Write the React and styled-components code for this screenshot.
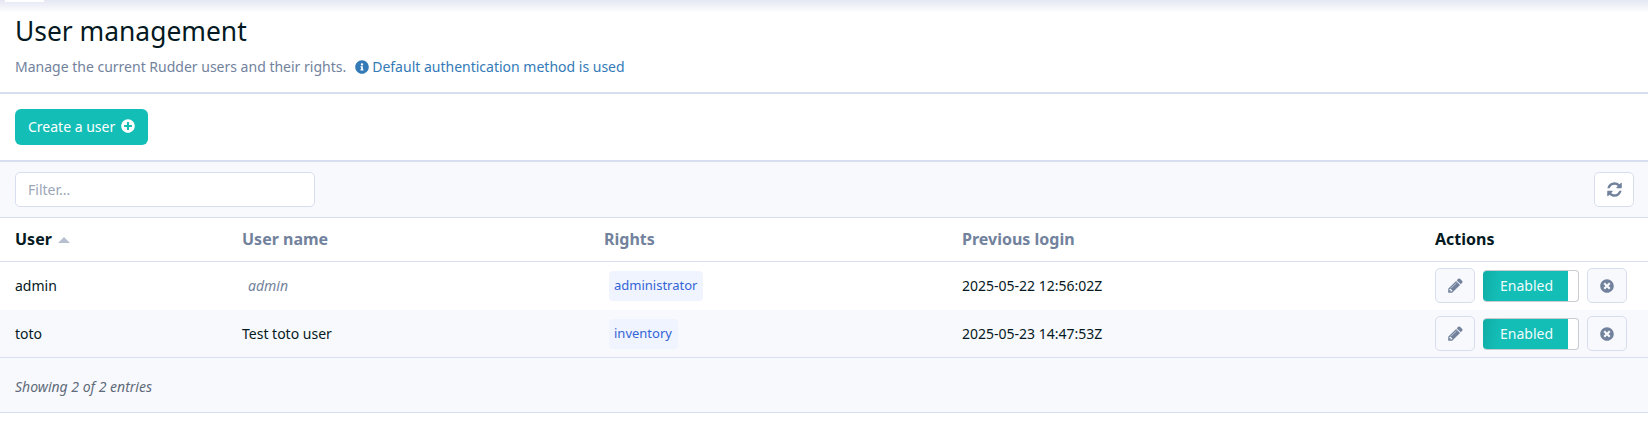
import React from "react";
import styled, { createGlobalStyle } from "styled-components";
import { FaInfoCircle, FaPlusCircle, FaTimesCircle } from "react-icons/fa";

const Global = createGlobalStyle`
  html, body { margin: 0; padding: 0; background: #fff; }
  body { font-family: "Noto Sans", sans-serif; font-size: 14px; color: #041922; }
  * { box-sizing: border-box; }
`;

const Page = styled.div`
  position: relative;
  width: 1648px;
  height: 421px;
  overflow: hidden;
  background: #fff;
`;
const TopShadow = styled.div`
  position: absolute;
  inset: 0 0 auto 0;
  height: 13px;
  background: linear-gradient(#e4e7f2, #ffffff);
`;
const TopTab = styled.div`
  position: absolute;
  left: 5px;
  top: 0;
  width: 39px;
  height: 2px;
  background: #fff;
`;
const Header = styled.header`
  position: relative;
  height: 94px;
  padding: 12px 15px 0;
  border-bottom: 2px solid #d6deef;
`;
const Title = styled.h1`
  margin: 0;
  height: 38px;
  font-size: 26.4px;
  line-height: 38px;
  font-weight: 400;
  color: #041922;
`;
const Subtitle = styled.p`
  margin: 7px 0 0;
  display: flex;
  align-items: center;
  font-size: 14px;
  line-height: 20px;
  color: #72829d;
`;
const Info = styled.span`
  display: inline-flex;
  align-items: center;
  gap: 3px;
  margin-left: 9px;
  color: #337ab7;
  svg { font-size: 14px; }
`;
const ActionBar = styled.div`
  display: flex;
  align-items: flex-start;
  height: 68px;
  padding: 15px 15px 0;
  border-bottom: 2px solid #d6deef;
`;
const CreateButton = styled.button`
  display: inline-flex;
  align-items: center;
  gap: 6px;
  width: 133px;
  height: 36px;
  padding: 0 13px 2px;
  border: 0;
  border-radius: 6px;
  background: #13beb7;
  color: #fff;
  white-space: nowrap;
  font: 400 14px "Noto Sans", sans-serif;
  svg { font-size: 14px; flex: none; }
`;
const FilterBar = styled.div`
  display: flex;
  align-items: center;
  justify-content: space-between;
  height: 56px;
  padding: 0 14px 1px 15px;
  background: #f8f9fc;
  border-bottom: 1px solid #d6deef;
`;
const FilterInput = styled.input`
  width: 300px;
  height: 35px;
  padding: 0 12px;
  border: 1px solid #d6deef;
  border-radius: 5px;
  background: #fff;
  font: 400 14px "Noto Sans", sans-serif;
  &::placeholder { color: #9aa5b8; opacity: 1; }
`;
const IconButton = styled.button`
  display: inline-flex;
  align-items: center;
  justify-content: center;
  width: 40px;
  height: 35px;
  padding: 0;
  border: 1px solid #d6deef;
  border-radius: 5px;
  background: ${(p) => p.$bg || "#f8f9fc"};
  color: #72829d;
  svg { font-size: 14px; }
`;
const Table = styled.table`
  width: 1648px;
  table-layout: fixed;
  border-collapse: separate;
  border-spacing: 0;
`;
const Th = styled.th`
  height: 44px;
  padding: 0 0 1px 15px;
  text-align: left;
  font-size: 16px;
  font-weight: 700;
  color: ${(p) => (p.$active ? "#041922" : "#72829d")};
  border-bottom: 1px solid #d6deef;
`;
const SortArrow = styled.span`
  display: inline-block;
  margin-left: 6px;
  vertical-align: 2px;
  border-left: 6px solid transparent;
  border-right: 6px solid transparent;
  border-bottom: 6px solid #b5bfd0;
`;
const Row = styled.tr`
  background: ${(p) => (p.$alt ? "#f8f9fc" : "#fff")};
  td {
    height: ${(p) => (p.$alt ? "47px" : "48px")};
    padding-bottom: ${(p) => (p.$alt ? "0" : "1px")};
  }
`;
const Td = styled.td`
  padding: 0 0 0 15px;
  font-size: 14px;
  color: #041922;
`;
const MutedName = styled.span`
  margin-left: 6px;
  font-style: italic;
  color: #72829d;
`;
const Badge = styled.span`
  display: inline-block;
  vertical-align: middle;
  margin-left: 5px;
  height: 30px;
  padding: 0 6px 0 5px;
  line-height: 28px;
  font-size: 13px;
  border-radius: 4px;
  background: #f0f4ff;
  color: #3465d6;
`;
const Actions = styled.div`
  display: flex;
  align-items: center;
  gap: 8px;
`;
const Toggle = styled.div`
  display: flex;
  width: 96px;
  height: 32px;
  border-radius: 4px;
  overflow: hidden;
  background: #fff;
  border: 1px solid #c8cbd0;
  border-left: 0;
`;
const ToggleOn = styled.div`
  width: 85px;
  margin: -1px 0;
  padding-left: 2px;
  display: flex;
  align-items: center;
  justify-content: center;
  color: #eefcfb;
  background: linear-gradient(100deg, #10ada5, #13beb7 22%);
  border-radius: 4px 0 0 4px;
  font-size: 14px;
`;
const Footer = styled.div`
  height: 56px;
  padding: 2px 0 0 15px;
  display: flex;
  align-items: center;
  background: #f8f9fc;
  border-top: 1px solid #d6deef;
  border-bottom: 1px solid #d6deef;
  font-size: 14px;
  font-style: italic;
  color: #5f6b7a;
`;

const RefreshIcon = () => (
  <svg width="17" height="17" viewBox="0 0 1792 1792" fill="currentColor" aria-hidden="true">
    <path d="M1639 1056q0 5-1 7-64 268-268 434.5t-478 166.5q-146 0-282.5-55t-243.5-157l-129 129q-19 19-45 19t-45-19-19-45v-448q0-26 19-45t45-19h448q26 0 45 19t19 45-19 45l-137 137q71 66 161 102t187 36q134 0 250-65t186-179q11-17 53-117 8-23 30-23h192q13 0 22.5 9.5t9.5 22.5zm25-800v448q0 26-19 45t-45 19h-448q-26 0-45-19t-19-45 19-45l138-138q-148-137-349-137-134 0-250 65t-186 179q-11 17-53 117-8 23-30 23h-199q-13 0-22.5-9.5t-9.5-22.5v-7q65-268 270-434.5t480-166.5q146 0 284 55.5t245 156.5l130-129q19-19 45-19t45 19 19 45z" />
  </svg>
);
const PencilIcon = () => (
  <svg width="17" height="17" viewBox="0 0 1792 1792" fill="currentColor" aria-hidden="true">
    <path d="M491 1536l91-91-235-235-91 91v107h128v128h107zm523-928q0-22-22-22-10 0-17 7l-542 542q-7 7-7 17 0 22 22 22 10 0 17-7l542-542q7-7 7-17zm-54-192l416 416-832 832h-416v-416zm683 96q0 53-37 90l-166 166-416-416 166-165q36-38 90-38 53 0 91 38l235 234q37 39 37 91z" />
  </svg>
);

const users = [
  { id: "admin", name: "admin", muted: true, right: "administrator", login: "2025-05-22 12:56:02Z" },
  { id: "toto", name: "Test toto user", right: "inventory", login: "2025-05-23 14:47:53Z", alt: true },
];

export default function App() {
  return (
    <Page>
      <Global />
      <TopShadow />
      <TopTab />
      <Header>
        <Title>User management</Title>
        <Subtitle>
          Manage the current Rudder users and their rights.
          <Info>
            <FaInfoCircle /> Default authentication method is used
          </Info>
        </Subtitle>
      </Header>
      <ActionBar>
        <CreateButton>
          Create a user <FaPlusCircle />
        </CreateButton>
      </ActionBar>
      <FilterBar>
        <FilterInput placeholder="Filter..." />
        <IconButton $bg="#fff" aria-label="Refresh">
          <RefreshIcon />
        </IconButton>
      </FilterBar>
      <Table>
        <colgroup>
          <col width="227" />
          <col width="362" />
          <col width="358" />
          <col width="473" />
          <col width="228" />
        </colgroup>
        <thead>
          <tr>
            <Th $active>
              User
              <SortArrow />
            </Th>
            <Th>User name</Th>
            <Th>Rights</Th>
            <Th>Previous login</Th>
            <Th $active>Actions</Th>
          </tr>
        </thead>
        <tbody>
          {users.map((u) => (
            <Row key={u.id} $alt={u.alt}>
              <Td>{u.id}</Td>
              <Td>{u.muted ? <MutedName>{u.name}</MutedName> : u.name}</Td>
              <Td>
                <Badge>{u.right}</Badge>
              </Td>
              <Td>{u.login}</Td>
              <Td>
                <Actions>
                  <IconButton aria-label="Edit">
                    <PencilIcon />
                  </IconButton>
                  <Toggle>
                    <ToggleOn>Enabled</ToggleOn>
                  </Toggle>
                  <IconButton aria-label="Delete">
                    <FaTimesCircle />
                  </IconButton>
                </Actions>
              </Td>
            </Row>
          ))}
        </tbody>
      </Table>
      <Footer>Showing 2 of 2 entries</Footer>
    </Page>
  );
}
